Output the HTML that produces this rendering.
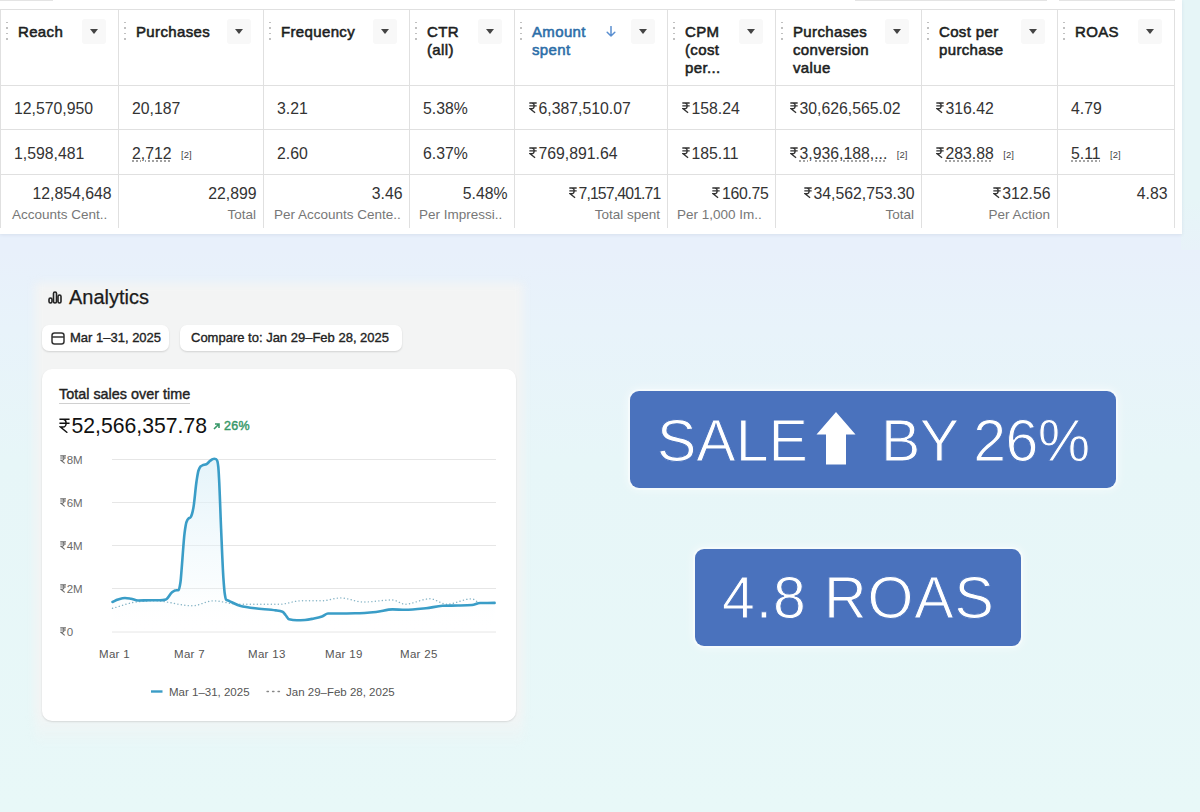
<!DOCTYPE html>
<html><head><meta charset="utf-8">
<style>
*{box-sizing:border-box;margin:0;padding:0}
html,body{width:1200px;height:812px;overflow:hidden}
body{position:relative;font-family:"Liberation Sans",sans-serif;
 background:linear-gradient(180deg,#e8f0fb 0px,#e8f0fb 250px,#e8f3fa 330px,#e7f6f8 460px,#e8f8f8 812px);}
.rightstrip{position:absolute;left:1181px;top:0;width:19px;height:250px;background:linear-gradient(180deg,#e6f5f7 0,#e6f5f7 200px,#e8f2f9 250px)}
.table{position:absolute;left:0;top:0;width:1182px;height:234px;background:#fff;box-shadow:0 1px 3px rgba(180,190,210,.3)}
.vl{position:absolute;top:9px;width:1px;height:219px;background:#e0e0e0}
.hl{position:absolute;left:0;width:1175px;height:1px;background:#e0e0e0}
.hd{position:absolute;top:23px;font-size:15px;font-weight:400;line-height:18px;color:#1c1e21;-webkit-text-stroke:0.55px #1c1e21;letter-spacing:0.35px}
.hd.blue{color:#2c6ea8;-webkit-text-stroke-color:#2c6ea8}
.arr{position:absolute;top:23px;font-size:14px;line-height:18px;color:#5a8fd0}
.drag{position:absolute;top:22px;width:2px;height:18px;background:repeating-linear-gradient(180deg,#c0c0c0 0 1.5px,transparent 1.5px 5.5px)}
.dd{position:absolute;top:19px;width:24.5px;height:24.5px;background:#f8f8f8;border-radius:3px}
.dd i{position:absolute;left:8px;top:10px;width:0;height:0;border-left:4.5px solid transparent;border-right:4.5px solid transparent;border-top:5px solid #444}
.cell{position:absolute;font-size:15.8px;line-height:18px;color:#333;white-space:nowrap}
.cell u{text-decoration:underline dotted #888;text-underline-offset:2px}
.cell sup{font-size:9.5px;vertical-align:1px;margin-left:9.5px;color:#444}
.tot{position:absolute;font-size:15.8px;line-height:18px;color:#333;white-space:nowrap;text-align:right;padding-right:6.5px}
.sub{position:absolute;font-size:13.5px;line-height:16px;color:#777;white-space:nowrap;text-align:right;padding-right:7px}
.rs{display:inline-block;margin-left:1px;margin-right:1.5px}
.panel{position:absolute;left:35px;top:283px;width:488px;height:462px;background:linear-gradient(180deg,#f3f4f4 0,#f3f4f4 93%,rgba(240,243,243,0) 100%);filter:blur(4px)}
.atitle{position:absolute;left:69px;top:285px;font-size:20px;line-height:24px;color:#1c1c1c;-webkit-text-stroke:0.25px #1c1c1c}
.pill{position:absolute;top:325px;height:26px;background:#fff;border-radius:7px;box-shadow:0 1px 2px rgba(0,0,0,.14);font-size:13px;font-weight:400;color:#222;line-height:26px;-webkit-text-stroke:0.35px #222}
.card{position:absolute;left:42px;top:369px;width:474px;height:352px;background:#fff;border-radius:10px;box-shadow:0 1px 2px rgba(0,0,0,.12)}
.ctitle{position:absolute;left:17px;top:15.5px;font-size:14.4px;font-weight:400;-webkit-text-stroke:0.4px #222;color:#222;line-height:18px;border-bottom:1px solid #d0d0d0;padding-bottom:0}
.amount{position:absolute;left:16px;top:45px;font-size:21.2px;color:#111;line-height:24px;white-space:nowrap}
.pct{position:absolute;left:171px;top:50px;font-size:12.5px;font-weight:400;-webkit-text-stroke:0.45px #379868;color:#379868;line-height:14px;letter-spacing:0.3px}
.chart{position:absolute;left:0;top:0}
.yl{position:absolute;left:60px;font-size:11.5px;line-height:14px;color:#6a6a6a;white-space:nowrap}
.yl .rs{margin:0 0.5px 0 0}
.xl{position:absolute;top:646.5px;font-size:11.5px;letter-spacing:0.3px;line-height:14px;color:#555;white-space:nowrap}
.legend{position:absolute;top:685px;font-size:11.5px;line-height:14px;color:#555;white-space:nowrap}
.badge{position:absolute;background:#4a72bd;border-radius:9px;box-shadow:0 0 0 2px rgba(255,255,255,.4),0 0 8px 3px rgba(255,255,255,.45);color:#fff;font-size:59px;line-height:64px;white-space:nowrap;-webkit-text-stroke:1px #4a72bd}

</style></head><body>
<div class="rightstrip"></div>
<div class="table">
<div class="vl" style="left:0px"></div>
<div class="vl" style="left:118px"></div>
<div class="vl" style="left:263px"></div>
<div class="vl" style="left:409px"></div>
<div class="vl" style="left:514px"></div>
<div class="vl" style="left:667px"></div>
<div class="vl" style="left:775px"></div>
<div class="vl" style="left:921px"></div>
<div class="vl" style="left:1057px"></div>
<div class="vl" style="left:1174px"></div>
<div class="hl" style="top:9px"></div>
<div class="hl" style="top:85px"></div>
<div class="hl" style="top:129px"></div>
<div class="hl" style="top:174px"></div>
<div class="drag" style="left:6px"></div>
<div class="hd" style="left:18px">Reach</div>
<div class="dd" style="left:81.5px"><i></i></div>
<div class="cell" style="left:14px;top:99.5px">12,570,950</div>
<div class="cell" style="left:14px;top:144.5px">1,598,481</div>
<div class="tot" style="left:0px;width:118px;top:184.5px;letter-spacing:0px">12,854,648</div>
<div class="sub" style="left:12px;top:207px;text-align:left">Accounts Cent..</div>
<div class="drag" style="left:124px"></div>
<div class="hd" style="left:136px">Purchases</div>
<div class="dd" style="left:226.5px"><i></i></div>
<div class="cell" style="left:132px;top:99.5px">20,187</div>
<div class="cell" style="left:132px;top:144.5px"><u>2,712</u><sup>[2]</sup></div>
<div class="tot" style="left:118px;width:145px;top:184.5px;letter-spacing:0px">22,899</div>
<div class="sub" style="left:128px;width:135px;top:207px">Total</div>
<div class="drag" style="left:269px"></div>
<div class="hd" style="left:281px">Frequency</div>
<div class="dd" style="left:372.5px"><i></i></div>
<div class="cell" style="left:277px;top:99.5px">3.21</div>
<div class="cell" style="left:277px;top:144.5px">2.60</div>
<div class="tot" style="left:263px;width:146px;top:184.5px;letter-spacing:0px">3.46</div>
<div class="sub" style="left:274px;top:207px;text-align:left">Per Accounts Cente..</div>
<div class="drag" style="left:415px"></div>
<div class="hd" style="left:427px">CTR<br>(all)</div>
<div class="dd" style="left:477.5px"><i></i></div>
<div class="cell" style="left:423px;top:99.5px">5.38%</div>
<div class="cell" style="left:423px;top:144.5px">6.37%</div>
<div class="tot" style="left:409px;width:105px;top:184.5px;letter-spacing:0px">5.48%</div>
<div class="sub" style="left:419px;top:207px;text-align:left">Per Impressi..</div>
<div class="drag" style="left:520px"></div>
<div class="hd blue" style="left:532px">Amount<br>spent</div>
<svg style="position:absolute;left:606px;top:26px" width="10" height="11" viewBox="0 0 10 11"><path d="M5 0.5V10M1.2 6.3L5 10L8.8 6.3" fill="none" stroke="#5a8fd0" stroke-width="1.5" stroke-linecap="round" stroke-linejoin="round"/></svg>
<div class="dd" style="left:630.5px"><i></i></div>
<div class="cell" style="left:528px;top:99.5px"><svg class="rs" width="8.0" height="11.5" viewBox="0 0 10 14" style="vertical-align:0"><path d="M0.4 1.1H9.6M0.4 4.7H9.6M0.7 1.1H3.6C7.4 1.1 7.4 8.2 3.6 8.2H1.4L7.6 13.3" fill="none" stroke="currentColor" stroke-width="1.7" stroke-linejoin="miter" stroke-linecap="butt"/></svg>6,387,510.07</div>
<div class="cell" style="left:528px;top:144.5px"><svg class="rs" width="8.0" height="11.5" viewBox="0 0 10 14" style="vertical-align:0"><path d="M0.4 1.1H9.6M0.4 4.7H9.6M0.7 1.1H3.6C7.4 1.1 7.4 8.2 3.6 8.2H1.4L7.6 13.3" fill="none" stroke="currentColor" stroke-width="1.7" stroke-linejoin="miter" stroke-linecap="butt"/></svg>769,891.64</div>
<div class="tot" style="left:514px;width:153px;top:184.5px;letter-spacing:-0.85px"><svg class="rs" width="8.0" height="11.5" viewBox="0 0 10 14" style="vertical-align:0"><path d="M0.4 1.1H9.6M0.4 4.7H9.6M0.7 1.1H3.6C7.4 1.1 7.4 8.2 3.6 8.2H1.4L7.6 13.3" fill="none" stroke="currentColor" stroke-width="1.7" stroke-linejoin="miter" stroke-linecap="butt"/></svg>7,157,401.71</div>
<div class="sub" style="left:524px;width:143px;top:207px">Total spent</div>
<div class="drag" style="left:673px"></div>
<div class="hd" style="left:685px">CPM<br>(cost<br>per...</div>
<div class="dd" style="left:738.5px"><i></i></div>
<div class="cell" style="left:681px;top:99.5px"><svg class="rs" width="8.0" height="11.5" viewBox="0 0 10 14" style="vertical-align:0"><path d="M0.4 1.1H9.6M0.4 4.7H9.6M0.7 1.1H3.6C7.4 1.1 7.4 8.2 3.6 8.2H1.4L7.6 13.3" fill="none" stroke="currentColor" stroke-width="1.7" stroke-linejoin="miter" stroke-linecap="butt"/></svg>158.24</div>
<div class="cell" style="left:681px;top:144.5px"><svg class="rs" width="8.0" height="11.5" viewBox="0 0 10 14" style="vertical-align:0"><path d="M0.4 1.1H9.6M0.4 4.7H9.6M0.7 1.1H3.6C7.4 1.1 7.4 8.2 3.6 8.2H1.4L7.6 13.3" fill="none" stroke="currentColor" stroke-width="1.7" stroke-linejoin="miter" stroke-linecap="butt"/></svg>185.11</div>
<div class="tot" style="left:667px;width:108px;top:184.5px;letter-spacing:-0.3px"><svg class="rs" width="8.0" height="11.5" viewBox="0 0 10 14" style="vertical-align:0"><path d="M0.4 1.1H9.6M0.4 4.7H9.6M0.7 1.1H3.6C7.4 1.1 7.4 8.2 3.6 8.2H1.4L7.6 13.3" fill="none" stroke="currentColor" stroke-width="1.7" stroke-linejoin="miter" stroke-linecap="butt"/></svg>160.75</div>
<div class="sub" style="left:677px;top:207px;text-align:left">Per 1,000 Im..</div>
<div class="drag" style="left:781px"></div>
<div class="hd" style="left:793px">Purchases<br>conversion<br>value</div>
<div class="dd" style="left:884.5px"><i></i></div>
<div class="cell" style="left:789px;top:99.5px"><svg class="rs" width="8.0" height="11.5" viewBox="0 0 10 14" style="vertical-align:0"><path d="M0.4 1.1H9.6M0.4 4.7H9.6M0.7 1.1H3.6C7.4 1.1 7.4 8.2 3.6 8.2H1.4L7.6 13.3" fill="none" stroke="currentColor" stroke-width="1.7" stroke-linejoin="miter" stroke-linecap="butt"/></svg>30,626,565.02</div>
<div class="cell" style="left:789px;top:144.5px"><u><svg class="rs" width="8.0" height="11.5" viewBox="0 0 10 14" style="vertical-align:0"><path d="M0.4 1.1H9.6M0.4 4.7H9.6M0.7 1.1H3.6C7.4 1.1 7.4 8.2 3.6 8.2H1.4L7.6 13.3" fill="none" stroke="currentColor" stroke-width="1.7" stroke-linejoin="miter" stroke-linecap="butt"/></svg>3,936,188,...</u><sup>[2]</sup></div>
<div class="tot" style="left:775px;width:146px;top:184.5px;letter-spacing:0px"><svg class="rs" width="8.0" height="11.5" viewBox="0 0 10 14" style="vertical-align:0"><path d="M0.4 1.1H9.6M0.4 4.7H9.6M0.7 1.1H3.6C7.4 1.1 7.4 8.2 3.6 8.2H1.4L7.6 13.3" fill="none" stroke="currentColor" stroke-width="1.7" stroke-linejoin="miter" stroke-linecap="butt"/></svg>34,562,753.30</div>
<div class="sub" style="left:785px;width:136px;top:207px">Total</div>
<div class="drag" style="left:927px"></div>
<div class="hd" style="left:939px">Cost per<br>purchase</div>
<div class="dd" style="left:1020.5px"><i></i></div>
<div class="cell" style="left:935px;top:99.5px"><svg class="rs" width="8.0" height="11.5" viewBox="0 0 10 14" style="vertical-align:0"><path d="M0.4 1.1H9.6M0.4 4.7H9.6M0.7 1.1H3.6C7.4 1.1 7.4 8.2 3.6 8.2H1.4L7.6 13.3" fill="none" stroke="currentColor" stroke-width="1.7" stroke-linejoin="miter" stroke-linecap="butt"/></svg>316.42</div>
<div class="cell" style="left:935px;top:144.5px"><u><svg class="rs" width="8.0" height="11.5" viewBox="0 0 10 14" style="vertical-align:0"><path d="M0.4 1.1H9.6M0.4 4.7H9.6M0.7 1.1H3.6C7.4 1.1 7.4 8.2 3.6 8.2H1.4L7.6 13.3" fill="none" stroke="currentColor" stroke-width="1.7" stroke-linejoin="miter" stroke-linecap="butt"/></svg>283.88</u><sup>[2]</sup></div>
<div class="tot" style="left:921px;width:136px;top:184.5px;letter-spacing:0px"><svg class="rs" width="8.0" height="11.5" viewBox="0 0 10 14" style="vertical-align:0"><path d="M0.4 1.1H9.6M0.4 4.7H9.6M0.7 1.1H3.6C7.4 1.1 7.4 8.2 3.6 8.2H1.4L7.6 13.3" fill="none" stroke="currentColor" stroke-width="1.7" stroke-linejoin="miter" stroke-linecap="butt"/></svg>312.56</div>
<div class="sub" style="left:931px;width:126px;top:207px">Per Action</div>
<div class="drag" style="left:1063px"></div>
<div class="hd" style="left:1075px">ROAS</div>
<div class="dd" style="left:1137.5px"><i></i></div>
<div class="cell" style="left:1071px;top:99.5px">4.79</div>
<div class="cell" style="left:1071px;top:144.5px"><u>5.11</u><sup>[2]</sup></div>
<div class="tot" style="left:1057px;width:117px;top:184.5px;letter-spacing:0px">4.83</div>
<div style="position:absolute;left:0;top:0;width:53px;height:1px;background:#e4e4e4"></div><div style="position:absolute;left:855px;top:0;width:192px;height:1px;background:#e4e4e4"></div><div style="position:absolute;left:1059px;top:0;width:116px;height:1px;background:#e4e4e4"></div>
</div>

<div class="panel"></div>
<div class="atitle"><svg width="15" height="13" viewBox="0 0 15 13" style="position:absolute;left:-21px;top:6px"><g fill="none" stroke="#222" stroke-width="1.6"><rect x="1" y="7" width="3" height="5" rx="1.5"/><rect x="5.5" y="1" width="3" height="11" rx="1.5"/><rect x="10" y="4" width="3" height="8" rx="1.5"/></g></svg>Analytics</div>
<div class="pill" style="left:42px;width:127px"><svg width="14" height="13" viewBox="0 0 14 13" style="position:absolute;left:9px;top:6.5px"><rect x="1" y="1" width="12" height="11" rx="2.5" fill="none" stroke="#333" stroke-width="1.5"/><line x1="1" x2="13" y1="5" y2="5" stroke="#333" stroke-width="1.5"/></svg><span style="position:absolute;left:28px">Mar 1–31, 2025</span></div>
<div class="pill" style="left:180px;width:222px"><span style="position:absolute;left:11px">Compare to: Jan 29–Feb 28, 2025</span></div>
<div class="card">
  <div class="ctitle">Total sales over time</div>
  <div class="amount"><svg class="rs" width="11" height="15.5" viewBox="0 0 10 14" style="vertical-align:0"><path d="M0.4 1.1H9.6M0.4 4.7H9.6M0.7 1.1H3.6C7.4 1.1 7.4 8.2 3.6 8.2H1.4L7.6 13.3" fill="none" stroke="currentColor" stroke-width="1.3" stroke-linejoin="miter" stroke-linecap="butt"/></svg>52,566,357.78</div>
  <div class="pct"><svg width="7" height="7" viewBox="0 0 7 7" style="margin-right:4px"><path d="M1 6L6 1M2 1H6V5" fill="none" stroke="#379868" stroke-width="1.6"/></svg>26%</div>
</div>
<svg class="chart" width="1200" height="812" viewBox="0 0 1200 812">
  <defs><linearGradient id="fg" x1="0" y1="0" x2="0" y2="1"><stop offset="0" stop-color="#dcf0f8" stop-opacity=".75"/><stop offset=".7" stop-color="#e9f6fb" stop-opacity=".3"/><stop offset="1" stop-color="#ffffff" stop-opacity="0"/></linearGradient></defs>
  <line x1="112" x2="496" y1="459.5" y2="459.5" stroke="#e6e6e6" stroke-width="1"/><line x1="112" x2="496" y1="502.5" y2="502.5" stroke="#e6e6e6" stroke-width="1"/><line x1="112" x2="496" y1="545.5" y2="545.5" stroke="#e6e6e6" stroke-width="1"/><line x1="112" x2="496" y1="588.5" y2="588.5" stroke="#e6e6e6" stroke-width="1"/><line x1="112" x2="496" y1="632" y2="632" stroke="#e6e6e6" stroke-width="1"/>
  <path d="M112.5 602.0 C114.33 601.17 116.17 600.04 118.0 599.5 C120.33 598.81 122.67 598.00 125.0 598.0 C127.00 598.00 129.00 598.46 131.0 598.8 C133.33 599.20 135.67 600.50 138.0 600.5 C142.00 600.50 146.00 600.20 150.0 600.2 C153.33 600.20 156.67 600.20 160.0 600.2 C161.97 600.20 163.93 599.88 165.9 599.4 C167.87 598.92 169.83 594.06 171.8 592.5 C172.87 591.66 173.93 590.78 175.0 590.5 C176.23 590.18 177.47 590.33 178.7 589.9 C179.30 589.69 179.90 585.93 180.5 582.0 C180.90 579.38 181.30 572.92 181.7 568.2 C182.67 556.80 183.63 540.11 184.6 532.8 C185.23 528.01 185.87 523.70 186.5 522.0 C187.17 520.21 187.83 519.06 188.5 518.5 C189.17 517.94 189.83 518.01 190.5 517.4 C191.00 516.94 191.50 515.52 192.0 514.0 C192.50 512.48 193.00 509.99 193.5 507.1 C194.50 501.31 195.50 488.09 196.5 481.5 C197.17 477.10 197.83 472.46 198.5 470.5 C199.17 468.54 199.83 467.10 200.5 466.5 C201.13 465.93 201.77 465.66 202.4 465.4 C203.70 464.86 205.00 464.79 206.3 464.2 C207.60 463.61 208.90 461.80 210.2 460.8 C210.97 460.21 211.73 459.51 212.5 459.2 C213.07 458.97 213.63 458.70 214.2 458.7 C214.80 458.70 215.40 458.91 216.0 459.2 C216.43 459.41 216.87 460.00 217.3 461.0 C217.63 461.77 217.97 464.05 218.3 467.0 C218.57 469.36 218.83 474.63 219.1 479.6 C219.77 492.01 220.43 513.50 221.1 528.8 C221.87 546.39 222.63 566.99 223.4 578.1 C223.87 584.86 224.33 590.99 224.8 594.0 C225.20 596.58 225.60 599.12 226.0 599.5 C227.00 600.46 228.00 600.44 229.0 600.9 C232.60 602.55 236.20 604.79 239.8 605.7 C244.87 606.98 249.93 607.65 255.0 608.3 C262.00 609.20 269.00 609.38 276.0 610.4 C278.17 610.72 280.33 610.95 282.5 611.8 C283.50 612.19 284.50 613.86 285.5 615.0 C286.67 616.33 287.83 619.03 289.0 619.3 C291.67 619.92 294.33 620.20 297.0 620.2 C299.67 620.20 302.33 620.11 305.0 620.0 C308.00 619.87 311.00 619.10 314.0 618.5 C316.67 617.96 319.33 617.40 322.0 616.5 C324.00 615.82 326.00 613.50 328.0 613.5 C332.00 613.50 336.00 613.50 340.0 613.5 C345.00 613.50 350.00 613.41 355.0 613.3 C362.00 613.15 369.00 612.63 376.0 612.0 C381.50 611.50 387.00 609.40 392.5 609.4 C396.67 609.40 400.83 609.80 405.0 609.8 C412.00 609.80 419.00 608.99 426.0 608.3 C431.50 607.76 437.00 605.99 442.5 605.8 C447.67 605.62 452.83 605.63 458.0 605.5 C462.67 605.38 467.33 605.31 472.0 605.0 C474.67 604.82 477.33 603.04 480.0 603.0 C484.87 602.93 489.73 602.93 494.6 602.9 L494.6 632 L112.5 632 Z" fill="url(#fg)"/>
  <path d="M112.5 608.3 C121.10 606.10 129.70 602.43 138.3 601.7 C143.87 601.23 149.43 600.80 155.0 600.8 C167.50 600.80 180.00 605.80 192.5 605.8 C199.43 605.80 206.37 600.80 213.3 600.8 C221.63 600.80 229.97 604.20 238.3 604.2 C252.20 604.20 266.10 604.20 280.0 604.2 C286.93 604.20 293.87 600.80 300.8 600.8 C307.77 600.80 314.73 600.80 321.7 600.8 C327.93 600.80 334.17 597.90 340.4 597.9 C348.03 597.90 355.67 602.00 363.3 602.0 C373.03 602.00 382.77 600.00 392.5 600.0 C396.67 600.00 400.83 604.20 405.0 604.2 C413.33 604.20 421.67 598.75 430.0 598.8 C435.57 598.75 441.13 604.20 446.7 604.2 C455.03 604.20 463.37 598.75 471.7 598.8 C474.47 598.75 477.23 602.90 480.0 602.9 C484.87 602.90 489.73 602.90 494.6 602.9" fill="none" stroke="#86b4c6" stroke-width="1.4" stroke-dasharray="0.1 3.4" stroke-linecap="round"/>
  <path d="M112.5 602.0 C114.33 601.17 116.17 600.04 118.0 599.5 C120.33 598.81 122.67 598.00 125.0 598.0 C127.00 598.00 129.00 598.46 131.0 598.8 C133.33 599.20 135.67 600.50 138.0 600.5 C142.00 600.50 146.00 600.20 150.0 600.2 C153.33 600.20 156.67 600.20 160.0 600.2 C161.97 600.20 163.93 599.88 165.9 599.4 C167.87 598.92 169.83 594.06 171.8 592.5 C172.87 591.66 173.93 590.78 175.0 590.5 C176.23 590.18 177.47 590.33 178.7 589.9 C179.30 589.69 179.90 585.93 180.5 582.0 C180.90 579.38 181.30 572.92 181.7 568.2 C182.67 556.80 183.63 540.11 184.6 532.8 C185.23 528.01 185.87 523.70 186.5 522.0 C187.17 520.21 187.83 519.06 188.5 518.5 C189.17 517.94 189.83 518.01 190.5 517.4 C191.00 516.94 191.50 515.52 192.0 514.0 C192.50 512.48 193.00 509.99 193.5 507.1 C194.50 501.31 195.50 488.09 196.5 481.5 C197.17 477.10 197.83 472.46 198.5 470.5 C199.17 468.54 199.83 467.10 200.5 466.5 C201.13 465.93 201.77 465.66 202.4 465.4 C203.70 464.86 205.00 464.79 206.3 464.2 C207.60 463.61 208.90 461.80 210.2 460.8 C210.97 460.21 211.73 459.51 212.5 459.2 C213.07 458.97 213.63 458.70 214.2 458.7 C214.80 458.70 215.40 458.91 216.0 459.2 C216.43 459.41 216.87 460.00 217.3 461.0 C217.63 461.77 217.97 464.05 218.3 467.0 C218.57 469.36 218.83 474.63 219.1 479.6 C219.77 492.01 220.43 513.50 221.1 528.8 C221.87 546.39 222.63 566.99 223.4 578.1 C223.87 584.86 224.33 590.99 224.8 594.0 C225.20 596.58 225.60 599.12 226.0 599.5 C227.00 600.46 228.00 600.44 229.0 600.9 C232.60 602.55 236.20 604.79 239.8 605.7 C244.87 606.98 249.93 607.65 255.0 608.3 C262.00 609.20 269.00 609.38 276.0 610.4 C278.17 610.72 280.33 610.95 282.5 611.8 C283.50 612.19 284.50 613.86 285.5 615.0 C286.67 616.33 287.83 619.03 289.0 619.3 C291.67 619.92 294.33 620.20 297.0 620.2 C299.67 620.20 302.33 620.11 305.0 620.0 C308.00 619.87 311.00 619.10 314.0 618.5 C316.67 617.96 319.33 617.40 322.0 616.5 C324.00 615.82 326.00 613.50 328.0 613.5 C332.00 613.50 336.00 613.50 340.0 613.5 C345.00 613.50 350.00 613.41 355.0 613.3 C362.00 613.15 369.00 612.63 376.0 612.0 C381.50 611.50 387.00 609.40 392.5 609.4 C396.67 609.40 400.83 609.80 405.0 609.8 C412.00 609.80 419.00 608.99 426.0 608.3 C431.50 607.76 437.00 605.99 442.5 605.8 C447.67 605.62 452.83 605.63 458.0 605.5 C462.67 605.38 467.33 605.31 472.0 605.0 C474.67 604.82 477.33 603.04 480.0 603.0 C484.87 602.93 489.73 602.93 494.6 602.9" fill="none" stroke="#3a9dc7" stroke-width="2.6" stroke-linejoin="round" stroke-linecap="round"/>
  <line x1="151" x2="162.5" y1="691.5" y2="691.5" stroke="#3a9cc6" stroke-width="2.4"/>
  <path d="M267 691.5H281" stroke="#888" stroke-width="1.3" stroke-dasharray="1.5 4" stroke-linecap="round"/>
</svg>
<div class="yl" style="top:453px"><svg class="rs" width="6.2" height="9" viewBox="0 0 10 14" style="vertical-align:0"><path d="M0.4 1.1H9.6M0.4 4.7H9.6M0.7 1.1H3.6C7.4 1.1 7.4 8.2 3.6 8.2H1.4L7.6 13.3" fill="none" stroke="currentColor" stroke-width="1.7" stroke-linejoin="miter" stroke-linecap="butt"/></svg>8M</div><div class="yl" style="top:496px"><svg class="rs" width="6.2" height="9" viewBox="0 0 10 14" style="vertical-align:0"><path d="M0.4 1.1H9.6M0.4 4.7H9.6M0.7 1.1H3.6C7.4 1.1 7.4 8.2 3.6 8.2H1.4L7.6 13.3" fill="none" stroke="currentColor" stroke-width="1.7" stroke-linejoin="miter" stroke-linecap="butt"/></svg>6M</div><div class="yl" style="top:539px"><svg class="rs" width="6.2" height="9" viewBox="0 0 10 14" style="vertical-align:0"><path d="M0.4 1.1H9.6M0.4 4.7H9.6M0.7 1.1H3.6C7.4 1.1 7.4 8.2 3.6 8.2H1.4L7.6 13.3" fill="none" stroke="currentColor" stroke-width="1.7" stroke-linejoin="miter" stroke-linecap="butt"/></svg>4M</div><div class="yl" style="top:582px"><svg class="rs" width="6.2" height="9" viewBox="0 0 10 14" style="vertical-align:0"><path d="M0.4 1.1H9.6M0.4 4.7H9.6M0.7 1.1H3.6C7.4 1.1 7.4 8.2 3.6 8.2H1.4L7.6 13.3" fill="none" stroke="currentColor" stroke-width="1.7" stroke-linejoin="miter" stroke-linecap="butt"/></svg>2M</div><div class="yl" style="top:625px"><svg class="rs" width="6.2" height="9" viewBox="0 0 10 14" style="vertical-align:0"><path d="M0.4 1.1H9.6M0.4 4.7H9.6M0.7 1.1H3.6C7.4 1.1 7.4 8.2 3.6 8.2H1.4L7.6 13.3" fill="none" stroke="currentColor" stroke-width="1.7" stroke-linejoin="miter" stroke-linecap="butt"/></svg>0</div>
<div class="xl" style="left:99px">Mar 1</div><div class="xl" style="left:174px">Mar 7</div><div class="xl" style="left:248px">Mar 13</div><div class="xl" style="left:325px">Mar 19</div><div class="xl" style="left:400px">Mar 25</div>
<div class="legend" style="left:169px">Mar 1–31, 2025</div>
<div class="legend" style="left:286px">Jan 29–Feb 28, 2025</div>


<div class="badge" style="left:630px;top:391px;width:486px;height:97px"><span style="position:absolute;left:27px;top:18px">SALE</span>
<svg width="40" height="53" viewBox="0 0 40 53" style="position:absolute;left:186px;top:21px"><path d="M20 0L39.5 22.5H30V52.5H10V22.5H0.5Z" fill="#fff"/></svg>
<span style="position:absolute;left:251px;top:18px;letter-spacing:-0.6px">BY 26%</span></div>
<div class="badge" style="left:695px;top:549px;width:326px;height:97px"><span style="position:absolute;left:27px;top:17px;letter-spacing:0.9px">4.8 ROAS</span></div>

</body></html>
